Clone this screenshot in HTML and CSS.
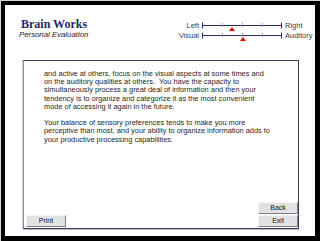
FILE: index.html
```html
<!DOCTYPE html>
<html>
<head>
<meta charset="utf-8">
<link rel="stylesheet" href="styles.css">
</head>
<body>
<div class="frame">
  <header class="header">
    <div class="brand">
      <div class="brand-title">Brain Works</div>
      <div class="brand-sub">Personal Evaluation</div>
    </div>
    <div class="scales">
      <span class="scale-label left">Left</span>
      <svg class="track" width="80" height="10" viewBox="0 0 80 10">
        <line x1="0.5" y1="4.5" x2="79.5" y2="4.5" stroke="#2d2d5c" stroke-width="1"/>
        <line x1="0.5" y1="1.5" x2="0.5" y2="7.5" stroke="#2d2d5c"/>
        <line x1="79.5" y1="1.5" x2="79.5" y2="7.5" stroke="#2d2d5c"/>
        <line x1="20.5" y1="2" x2="20.5" y2="6" stroke="#9a9aa8"/>
        <line x1="40.5" y1="2" x2="40.5" y2="6" stroke="#9a9aa8"/>
        <line x1="60.5" y1="2" x2="60.5" y2="6" stroke="#9a9aa8"/>
        <polygon points="30,6 27,10 33,10" fill="#e00000"/>
      </svg>
      <span class="scale-label">Right</span>
      <span class="scale-label left">Visual</span>
      <svg class="track" width="80" height="10" viewBox="0 0 80 10">
        <line x1="0.5" y1="4.5" x2="79.5" y2="4.5" stroke="#2d2d5c" stroke-width="1"/>
        <line x1="0.5" y1="1.5" x2="0.5" y2="7.5" stroke="#2d2d5c"/>
        <line x1="79.5" y1="1.5" x2="79.5" y2="7.5" stroke="#2d2d5c"/>
        <line x1="20.5" y1="2" x2="20.5" y2="6" stroke="#9a9aa8"/>
        <line x1="40.5" y1="2" x2="40.5" y2="6" stroke="#9a9aa8"/>
        <line x1="60.5" y1="2" x2="60.5" y2="6" stroke="#9a9aa8"/>
        <polygon points="41,6 38,10 44,10" fill="#e00000"/>
      </svg>
      <span class="scale-label">Auditory</span>
    </div>
  </header>
  <main class="panel">
    <div class="body-text">
      <p>and active at others, focus on the visual aspects at some times and<br>
      on the auditory qualities at others.&nbsp; You have the capacity to<br>
      simultaneously process a great deal of information and then your<br>
      tendency is to organize and categorize it as the most convenient<br>
      mode of accessing it again in the future.</p>
      <p>Your balance of sensory preferences tends to make you more<br>
      perceptive than most, and your ability to organize information adds to<br>
      your productive processing capabilities.</p>
    </div>
    <div class="footer">
      <button class="btn">Print</button>
      <div class="nav">
        <button class="btn">Back</button>
        <button class="btn">Exit</button>
      </div>
    </div>
  </main>
</div>
</body>
</html>
```
FILE: styles.css
```css
html {
  background: #d8d8d8;
}
body {
  margin: 0;
  width: 320px;
  height: 241px;
  overflow: hidden;
}
.frame {
  margin: 1px 0 0 1px;
  width: 310px;
  height: 231px;
  border-style: solid;
  border-color: #000;
  border-width: 4px 5px 5px 4px;
  background: #fff;
  display: flex;
  flex-direction: column;
}
.header {
  height: 55px;
  box-sizing: border-box;
  padding-top: 13px;
  display: flex;
  justify-content: space-between;
  align-items: flex-start;
}
.brand {
  padding-left: 16px;
}
.brand-title {
  font-family: "Liberation Serif", serif;
  font-weight: bold;
  font-size: 12px;
  line-height: 12px;
  color: #26266a;
}
.brand-sub {
  margin-top: 1px;
  font-family: "Liberation Sans", Arial, sans-serif;
  font-style: italic;
  font-size: 7.8px;
  line-height: 8px;
  color: #1a1a2a;
  margin-left: -2px;
}
.scales {
  margin-top: 3px;
  display: grid;
  grid-template-columns: 30px 80px 30px;
  grid-auto-rows: 10px;
  column-gap: 3px;
  align-items: center;
}
.track {
  display: block;
  overflow: visible;
}
.scale-label {
  font-family: "Liberation Sans", Arial, sans-serif;
  font-size: 7.5px;
  line-height: 10px;
  color: #3a3a4a;
  white-space: nowrap;
}
.scale-label.left {
  text-align: right;
}
.panel {
  margin-left: 18px;
  width: 276px;
  height: 169px;
  box-sizing: border-box;
  border: 1px solid #3c3c5e;
  border-left-color: #8a8aa0;
  box-shadow: -1px 0 0 #d4d4dc, 0 1px 0 #b8b8c8;
  padding: 9px 0 1px 2px;
  display: flex;
  flex-direction: column;
}
.body-text {
  flex: 1;
  margin-left: 18px;
  font-family: "Liberation Sans", Arial, sans-serif;
  font-size: 7.4px;
  line-height: 8.2px;
  color: #262626;
  white-space: nowrap;
}
.body-text p {
  margin: 0 0 8.2px 0;
}
.footer {
  display: flex;
  justify-content: space-between;
  align-items: flex-end;
}
.nav {
  display: flex;
  flex-direction: column;
  gap: 1px;
}
.btn {
  width: 40px;
  height: 12px;
  padding: 0;
  margin: 0;
  box-sizing: border-box;
  background: #e2e2e4;
  border: 1px solid;
  border-color: #f4f4f4 #7e7e86 #7e7e86 #f4f4f4;
  font-family: "Liberation Sans", Arial, sans-serif;
  font-size: 7px;
  line-height: 10px;
  color: #111;
  text-align: center;
}
```
